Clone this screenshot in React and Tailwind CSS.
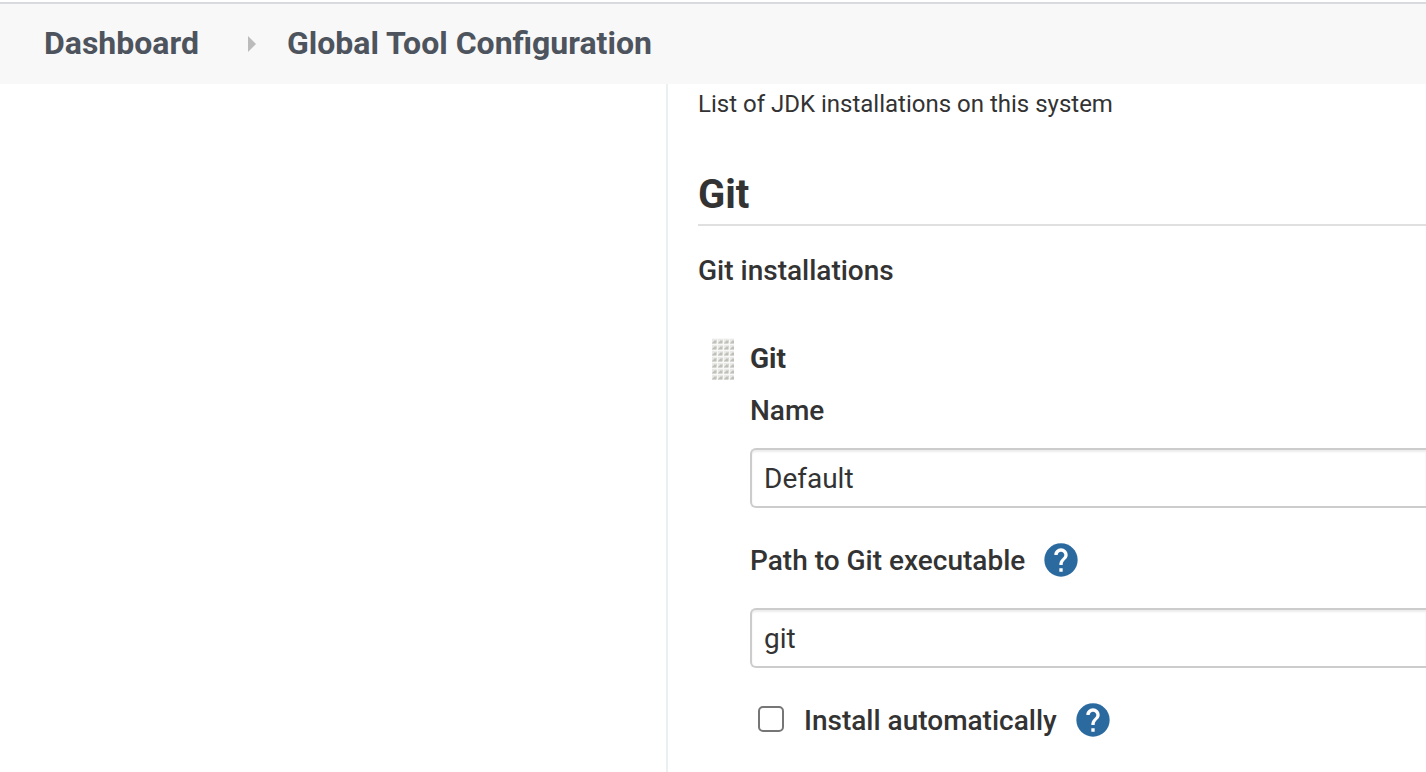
import React from "react";

function HelpButton({ label }) {
  return (
    <button type="button" aria-label={label} className="size-10 shrink-0 text-[#2b6a9f]">
      <svg viewBox="0 0 24 24" fill="currentColor" className="size-10" aria-hidden="true">
        <path d="M12 2C6.48 2 2 6.48 2 12s4.48 10 10 10 10-4.48 10-10S17.52 2 12 2z" />
        <path
          fill="#fff"
          d="M13 19h-2v-2h2v2zm2.07-7.75l-.9.92C13.45 12.9 13 13.5 13 15h-2v-.5c0-1.1.45-2.1 1.17-2.83l1.24-1.26c.37-.36.59-.86.59-1.41 0-1.1-.9-2-2-2s-2 .9-2 2H8c0-2.21 1.79-4 4-4s4 1.79 4 4c0 .88-.36 1.68-.93 2.25z"
        />
      </svg>
    </button>
  );
}

function DragHandle() {
  return (
    <svg width="22" height="42" viewBox="0 0 22 42" className="shrink-0 cursor-move" aria-hidden="true">
      <defs>
        <pattern id="grip" width="6" height="6" patternUnits="userSpaceOnUse">
          <rect width="6" height="6" fill="#f8f8f7" />
          <rect width="5" height="5" y="1" fill="#e9e9e7" />
          <path d="M0 6V4h1V3h1V2h3v3H4v1z" fill="#d6d6d2" />
          <path d="M1 5V4h1V3h2v2z" fill="#c0c0bb" />
        </pattern>
      </defs>
      <rect width="22" height="42" fill="url(#grip)" />
    </svg>
  );
}

const labelClass = "block text-[28px] leading-[42px] font-medium";

const inputClass =
  "block h-15 w-full rounded-l-md border-2 border-r-0 border-[#ccc] bg-white px-3 text-[28px] text-[#333] shadow-[inset_0_2px_2px_rgba(0,0,0,0.075)] outline-none";

export default function App() {
  return (
    <div className="flex min-h-screen flex-col bg-white pt-0.5 font-['Roboto',sans-serif] text-[#333]">
      <header className="border-t-2 border-[#d9d9e0] bg-[#f8f8f8]">
        <nav aria-label="Breadcrumb" className="flex h-20 items-center pb-0.5 pl-11 text-[32px] font-bold text-[#4d545d]">
          <a href="#dashboard">Dashboard</a>
          <svg width="8" height="18" viewBox="0 0 8 18" className="mr-[31px] ml-[49px]" aria-hidden="true">
            <path d="M0 2l8 8-8 8z" fill="#bbb" />
          </svg>
          <a href="#configuration">Global Tool Configuration</a>
        </nav>
      </header>
      <div className="flex grow">
        <aside className="w-[668px] shrink-0 border-r-2 border-[#eaeff2]" />
        <main className="min-w-0 grow pl-[30px]">
          <p className="text-2xl leading-10">List of JDK installations on this system</p>
          <h1 className="mt-11 border-b-2 border-[#e0e0e0] pb-0.5 text-[40px] leading-[54px] font-bold">Git</h1>
          <h2 className="mt-6 text-[28px] leading-[42px] font-medium">Git installations</h2>
          <section className="mt-[46px] flex gap-4 pl-3.5">
            <DragHandle />
            <div className="min-w-0 grow">
              <h3 className="text-[28px] leading-[42px] font-bold">Git</h3>
              <div className="mt-2.5">
                <label htmlFor="name" className={labelClass}>
                  Name
                </label>
              </div>
              <input id="name" type="text" defaultValue="Default" className={`mt-4 ${inputClass}`} />
              <div className="mt-8 flex items-start gap-4">
                <label htmlFor="path" className={labelClass}>
                  Path to Git executable
                </label>
                <HelpButton label="Help for path to Git executable" />
              </div>
              <input id="path" type="text" defaultValue="git" className={`mt-[26px] ${inputClass}`} />
              <div className="mt-8 flex items-start gap-4 pl-2">
                <input
                  id="auto"
                  type="checkbox"
                  className="mt-1.5 mr-1 size-[26px] appearance-none rounded-[5px] border-2 border-[#767676] bg-white checked:bg-[#2b6a9f]"
                />
                <label htmlFor="auto" className={labelClass}>
                  Install automatically
                </label>
                <HelpButton label="Help for install automatically" />
              </div>
            </div>
          </section>
        </main>
      </div>
    </div>
  );
}
